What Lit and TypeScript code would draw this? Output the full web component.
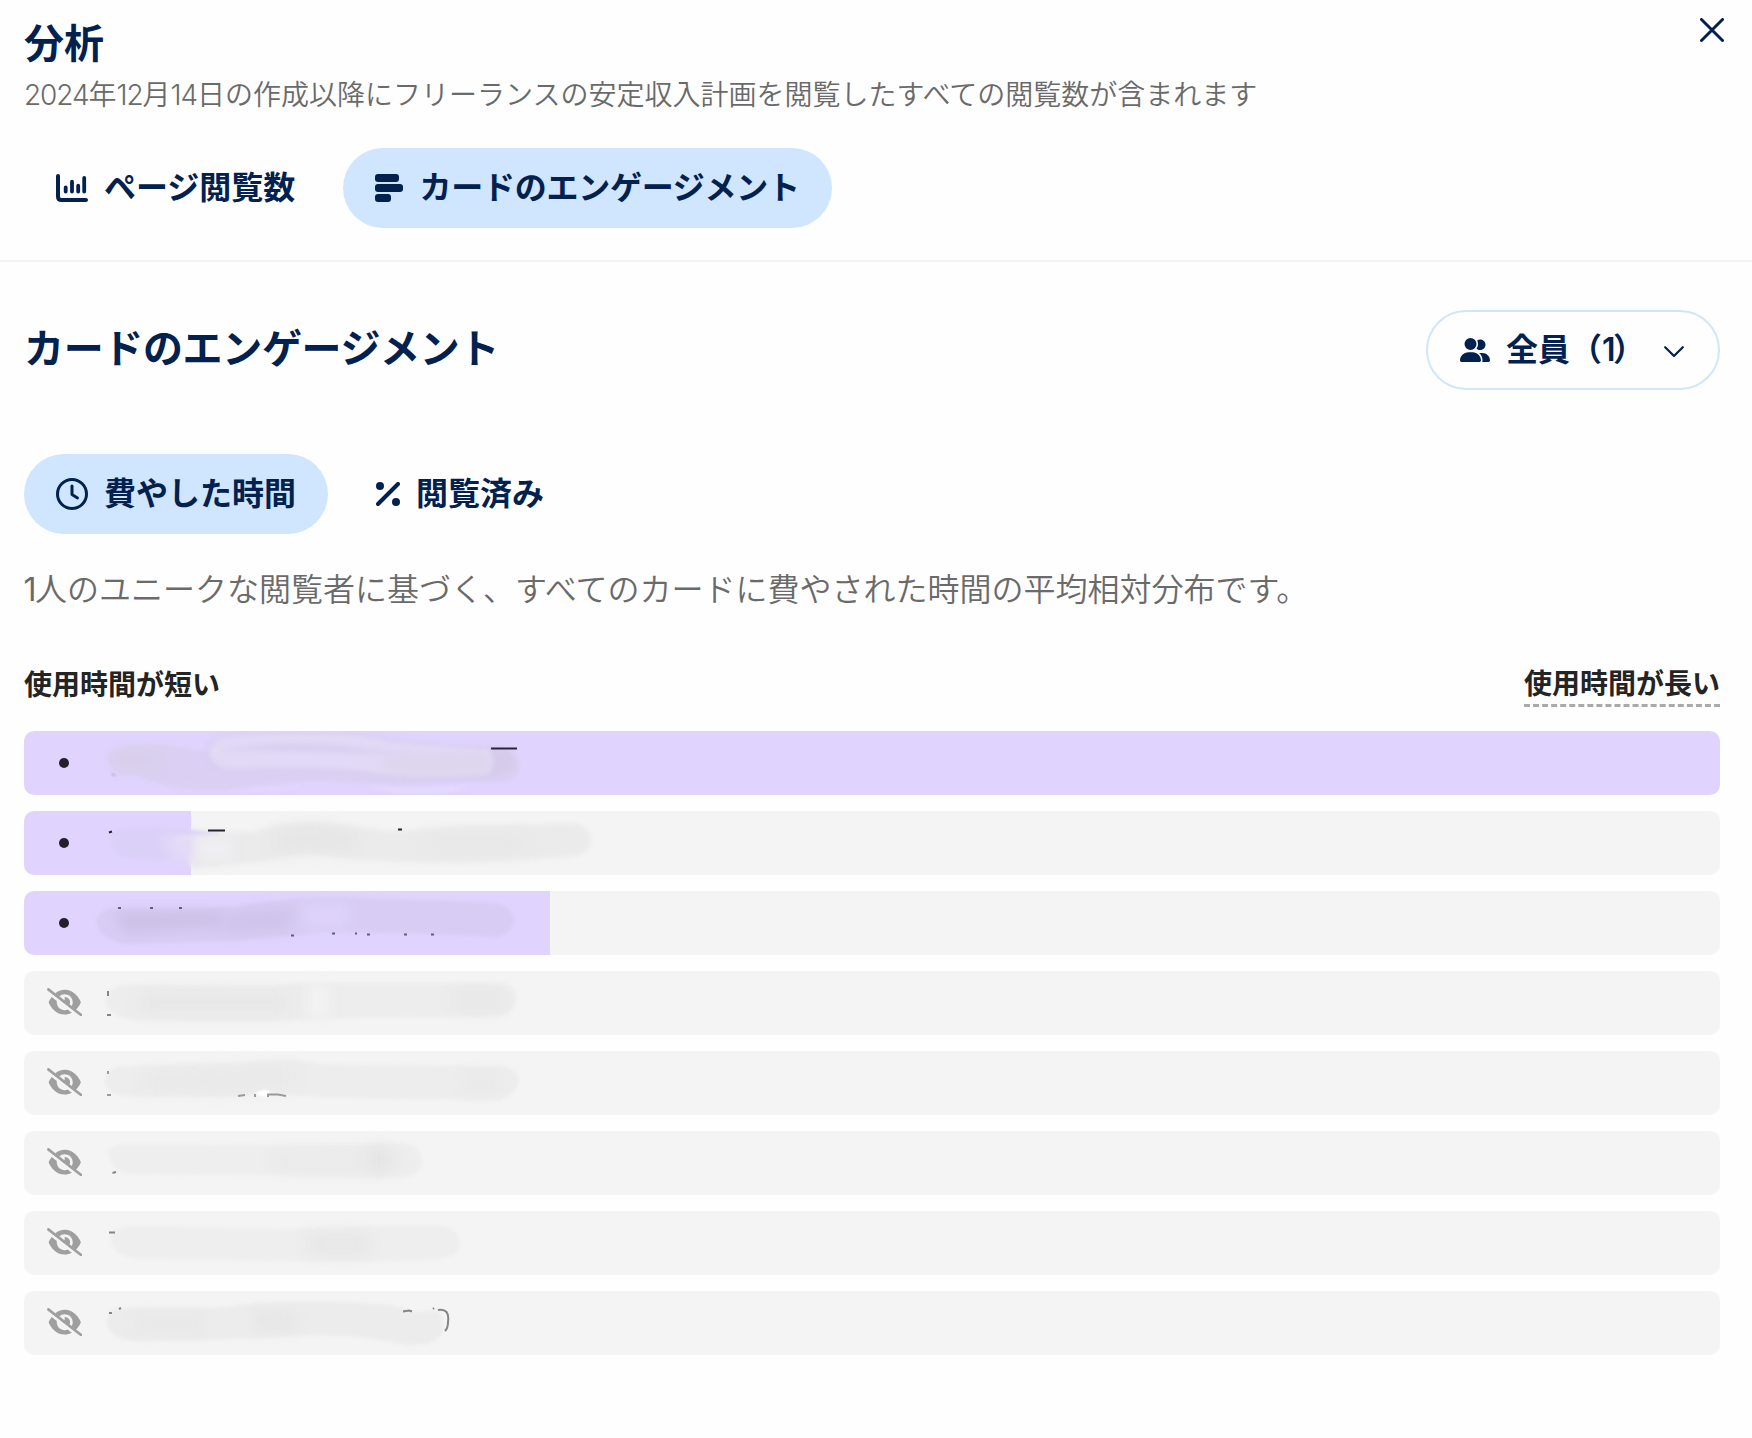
import { LitElement, html, css, svg } from "lit";
import { customElement, property } from "lit/decorators.js";

const icons: Record<string, unknown> = {
  chart: svg`<svg width="32" height="28" viewBox="0 0 32 28" fill="none" stroke="currentColor" stroke-linecap="round">
    <path stroke-width="4" stroke-linejoin="round" d="M2 2V22.500Q2 26 5.500 26H30"/>
    <path stroke-width="3.800" d="M9.700 13.500V17.500M16 7.700V17.500M22.200 11.700V17.500M28.200 4V17.500"/></svg>`,
  bars: svg`<svg width="28" height="28" viewBox="0 0 28 28" fill="currentColor">
    <rect width="24" height="8" rx="3"/><rect y="10" width="28" height="8" rx="3"/><rect y="20" width="16" height="8" rx="3"/></svg>`,
  clock: svg`<svg width="32" height="32" viewBox="0 0 32 32" fill="none" stroke="currentColor" stroke-width="3" stroke-linecap="round" stroke-linejoin="round">
    <circle cx="16" cy="16" r="14.500"/><path d="M16 8V16.500L21.500 20"/></svg>`,
  percent: svg`<svg width="24" height="24" viewBox="0 0 24 24" fill="currentColor">
    <circle cx="4" cy="4" r="4"/><circle cx="20" cy="20" r="4"/><path d="M2 22L22 2" stroke="currentColor" stroke-width="4" stroke-linecap="round"/></svg>`,
  users: svg`<svg width="30" height="24" viewBox="0 0 640 512" fill="currentColor">
    <path d="M96 128a128 128 0 1 1 256 0A128 128 0 1 1 96 128zM0 482.300C0 383.800 79.800 304 178.300 304h91.400C368.200 304 448 383.800 448 482.300c0 16.400-13.300 29.700-29.700 29.700H29.700C13.300 512 0 498.700 0 482.300zM609.300 512H471.400c5.400-9.400 8.600-20.300 8.600-32v-8c0-60.700-27.100-115.200-69.800-151.800c2.400-.1 4.700-.2 7.100-.2h61.400C567.800 320 640 392.200 640 481.300c0 17-13.800 30.700-30.700 30.700zM432 256c-31 0-59-12.600-79.300-32.900C372.400 196.500 384 163.600 384 128c0-26.800-6.600-52.100-18.300-74.300C384.300 40.100 407.200 32 432 32c61.900 0 112 50.100 112 112s-50.100 112-112 112z"/></svg>`,
  chevron: svg`<svg width="20" height="12" viewBox="0 0 20 12" fill="none" stroke="currentColor" stroke-width="2.200" stroke-linecap="round" stroke-linejoin="round"><path d="M1.200 1.200L10 10L18.800 1.200"/></svg>`,
  close: svg`<svg width="24" height="24" viewBox="0 0 24 24" fill="none" stroke="currentColor" stroke-width="3" stroke-linecap="round"><path d="M1.500 1.500L22.500 22.500M22.500 1.500L1.500 22.500"/></svg>`,
  eye: svg`<svg width="35.500" height="28.400" viewBox="0 0 640 512" fill="currentColor">
    <path d="M38.800 5.100C28.400-3.100 13.300-1.200 5.100 9.200S-1.200 34.700 9.200 42.900l592 464c10.400 8.200 25.500 6.300 33.700-4.100s6.300-25.500-4.100-33.700L525.600 386.700c39.600-40.600 66.400-86.100 79.900-118.400c3.300-7.900 3.300-16.700 0-24.600c-14.900-35.700-46.200-87.700-93-131.100C465.500 68.800 400.800 32 320 32c-68.200 0-125 26.300-169.300 60.800L38.800 5.100zM223.100 149.500C248.600 126.200 282.700 112 320 112c79.500 0 144 64.500 144 144c0 24.900-6.300 48.300-17.400 68.700L408 294.500c8.400-19.300 10.600-41.400 4.800-63.300c-11.100-41.500-47.800-69.400-88.600-71.100c-5.800-.2-9.200 6.100-7.400 11.700c2.100 6.400 3.300 13.200 3.300 20.300c0 10.200-2.400 19.800-6.600 28.300l-90.300-70.800zM373 389.900c-16.400 6.500-34.300 10.100-53 10.100c-79.500 0-144-64.500-144-144c0-6.900 .5-13.600 1.400-20.200L83.100 161.500C60.300 191.200 44 220.800 34.500 243.700c-3.300 7.900-3.300 16.700 0 24.600c14.900 35.700 46.200 87.700 93 131.100C174.500 443.200 239.200 480 320 480c47.800 0 89.900-12.900 126.200-32.500L373 389.900z"/></svg>`,
};

interface Patch { d: string; c: string; b?: number; }
interface Card { share: number; hidden?: boolean; patches: Patch[]; specks: string; speck: string; }

/* Masked card names: coordinates are relative to the row (row height 64). */
const cards: Card[] = [
  { share: 100, speck: "#2b2438", specks: "M467 17.500H493",
    patches: [
      { d: "M84 25L91 17M88 42V44L93 45", c: "#9d90b4", b: 1 },
      { d: "M85 24Q94 12 150 14L190 22L420 18L480 20Q497 24 495 38Q493 50 475 51L420 51Q370 56 330 52T220 57T110 43Q86 47 84 24Z", c: "#dbd0f3", b: 1.5 },
      { d: "M86 22Q100 12 140 17V41L95 42Q86 40 86 22Z", c: "#d9cfed", b: 4 },
      { d: "M150 50Q210 64 280 54Q230 66 150 50ZM340 54Q400 64 450 53Q400 70 340 54Z", c: "#e8e0fd", b: 2 },
      { d: "M183 20Q185 4 220 4Q320 -3 370 10Q440 17 480 16Q495 22 490 36Q488 46 460 46Q400 50 350 43T210 38Q187 38 183 20Z", c: "#d6cbeb", b: 3 },
      { d: "M185 20Q188 4 220 4Q320 -3 370 11Q440 17 465 18Q472 28 465 43Q400 49 350 42T210 38Q187 38 185 20Z", c: "#e2d9f6", b: 2.5 },
      { d: "M195 19Q270 9 330 17T450 25Q400 24 330 21T195 19Z", c: "#d6cced", b: 2.5 },
      { d: "M360 27L460 23Q471 28 465 41Q410 46 360 40Z", c: "#ddd5ed", b: 4 },
    ] },
  { share: 9.85, speck: "#26222b", specks: "M184 19.500H201M85 21.500L88 20.500M374 18.500H378",
    patches: [
      { d: "M86 23Q96 15 150 17L195 22V53L165 50L100 47Q86 42 86 23Z", c: "#dbd0f8", b: 1.5 },
      { d: "M150 26L230 20Q270 8 310 13T365 20L430 16L545 12Q567 13 567 30Q566 46 535 47L430 51Q360 53 315 46T240 51L168 57Z", c: "#ebebeb", b: 2 },
      { d: "M250 20Q290 10 330 21V41Q290 38 250 44Z", c: "#e6e6e6", b: 7 },
      { d: "M400 22H500V43H410Z", c: "#e8e8e8", b: 7 },
      { d: "M135 24H172V50H148Z", c: "#e2d9f8", b: 6 },
      { d: "M172 26H210V50H172Z", c: "#eeedf1", b: 6 },
    ] },
  { share: 31, speck: "#655c78", specks: "M94 17H97M126 17H129M155 17H158M267 44.500H270M308 42.500H311M331 42.500H333M343 43.500H346M380 43.500H383M407 43.500H410",
    patches: [
      { d: "M72 30Q75 18 90 18L210 16Q280 3 340 7L460 11Q490 12 490 29Q488 46 468 46L410 43L300 41L210 50L100 53Q73 46 72 30Z", c: "#d8ccf4", b: 1.5 },
      { d: "M90 20H200V36L100 42Z", c: "#cdc1e8", b: 6 },
      { d: "M200 22Q250 14 270 18L265 40L200 43Z", c: "#d0c4ec", b: 6 },
      { d: "M280 12H325V37H280Z", c: "#ddd2fa", b: 6 },
    ] },
  { share: 0, hidden: true, speck: "#858585", specks: "M84 20V25M83 44H87",
    patches: [
      { d: "M82 31Q84 13 105 14L250 15Q270 11 300 12L470 12Q493 12 492 30Q488 45 470 46L340 47L220 51L110 49Q84 46 82 31Z", c: "#ededed", b: 1.5 },
      { d: "M115 20H265V43H115Z", c: "#e8e8e8", b: 7 }, { d: "M284 13H305V47H284Z", c: "#f2f2f2", b: 6 }, { d: "M430 17H480V41H430Z", c: "#e8e8e8", b: 6 },
    ] },
  { share: 0, hidden: true, speck: "#9a9a9a", specks: "M84 20V23M83 44H87M214 45L221 44M231 43V46M244 46V43.500H254L262 45",
    patches: [
      { d: "M81 31Q82 14 105 15L220 11Q270 6 300 13L470 15Q495 15 495 31Q490 48 470 49L350 48L290 46L240 41L200 46L110 46Q82 45 81 31Z", c: "#ededed", b: 1.5 },
      { d: "M120 22L240 17L270 14V37L200 41L120 39Z", c: "#e9e9e9", b: 7 },
      { d: "M231 43Q239 36 247 41L242 46Z", c: "#fff", b: 1 }, { d: "M440 20H475V42H440Z", c: "#eaeaea", b: 6 },
    ] },
  { share: 0, hidden: true, speck: "#858585", specks: "M88.5 42L92 41",
    patches: [
      { d: "M84 22Q88 12 110 13L280 14L380 12Q397 14 398 31Q396 45 381 46L346 47L250 44L110 43Q88 43 84 22Z", c: "#eee", b: 1.5 },
      { d: "M250 20H375V40H250Z", c: "#eaeaea", b: 7 }, { d: "M345 16H365V40H345Z", c: "#e5e5e5", b: 6 },
    ] },
  { share: 0, hidden: true, speck: "#858585", specks: "M85 21.500H91",
    patches: [
      { d: "M87 23Q95 14 120 15L260 18L330 15L415 15Q437 16 436 34Q434 47 410 49L320 51L120 48Q84 48 87 23Z", c: "#eee", b: 1.5 },
      { d: "M285 22H345V44H285Z", c: "#e7e7e7", b: 7 },
    ] },
  { share: 0, hidden: true, speck: "#858585", specks: "M85 22H88M95 18L97 17M379 20.500L385 19.500L388 20.500M409 18L410 17M414 19Q426 17 424 31Q424 37 421 40",
    patches: [
      { d: "M83 32Q82 18 97 17L190 17Q250 8 320 11T382 21L415 20Q424 36 416 45Q405 56 382 54Q330 43 290 44L220 48L110 50Q85 48 83 32Z", c: "#ececec", b: 1.5 },
      { d: "M110 23H180V43H110Z", c: "#e9e9e9", b: 6 }, { d: "M230 19H272V41H230Z", c: "#e7e7e7", b: 6 },
    ] },
];

@customElement("pill-tab")
export class PillTab extends LitElement {
  @property() icon = "";
  @property() label = "";
  @property({ type: Boolean, reflect: true }) active = false;
  static styles = css`
    :host { display: flex; align-items: center; gap: 16px; box-sizing: border-box; height: 80px; padding: 0 32px; border-radius: 40px; color: #02214f; }
    :host([active]) { background: #d0e5fe; }
    svg { display: block; flex: none; }
    .label { font-size: 32px; line-height: 46px; font-weight: 600; white-space: nowrap; }
    .label.bars { letter-spacing: -0.25px; }
    .icon { flex: none; }
  `;
  render() {
    return html`<span class="icon">${icons[this.icon]}</span><span class="label ${this.icon}">${this.label}</span>`;
  }
}

@customElement("card-row")
export class CardRow extends LitElement {
  @property({ attribute: false }) card!: Card;
  static styles = css`
    :host { display: block; }
    .row { position: relative; height: 64px; border-radius: 10px; background: #f4f4f4; overflow: hidden; }
    .fill { height: 100%; background: #e0d4fe; }
    .mark { position: absolute; left: 22px; top: 0; width: 37px; height: 62px; display: flex; align-items: center; justify-content: center; color: #9f9f9f; }
    .mark svg { display: block; }
    .dot { width: 10px; height: 10px; border-radius: 50%; background: #231f2b; margin: 2px 0 0 -1px; }
    .mask { position: absolute; left: 0; top: 0; }
  `;
  render() {
    const c = this.card;
    return html`<div class="row">
      <div class="fill" style="width:${c.share}%"></div>
      <svg class="mask" width="640" height="64" viewBox="0 0 640 64">
        ${c.patches.map((p) => svg`<path d=${p.d} fill=${p.c} style="filter:blur(${p.b ?? 2}px)"/>`)}
        <path d=${c.specks} fill="none" stroke=${c.speck} stroke-width="2"/>
      </svg>
      <div class="mark">${c.hidden ? icons.eye : html`<span class="dot"></span>`}</div>
    </div>`;
  }
}

@customElement("app-root")
export class AppRoot extends LitElement {
  static styles = css`
    :host { display: block; box-sizing: border-box; height: 1438px; background: #fefefe; color: #02214f; overflow: hidden;
      font-family: Inter, "Noto Sans CJK JP", sans-serif; }
    svg { display: block; }
    header { box-sizing: border-box; height: 262px; border-bottom: 2px solid #f3f3f3; display: flex; justify-content: space-between; padding: 15px 28px 0 24px; }
    h1, h2, p { margin: 0; white-space: nowrap; }
    h1, h2 { font-size: 40px; line-height: 58px; font-weight: 600; }
    h2 { letter-spacing: -0.35px; padding-bottom: 2px; }
    .subtitle { font-size: 28px; line-height: 40px; color: #6a6a6a; margin-top: 2px; font-weight: 350; }
    .num { letter-spacing: -1.1px; }
    .tabs { display: flex; gap: 16px; }
    header .tabs { margin-top: 33px; }
    .close { padding-top: 3px; }
    main { padding: 48px 32px 0 24px; }
    .top { display: flex; justify-content: space-between; align-items: center; height: 80px; }
    .select { box-sizing: border-box; width: 294px; height: 80px; border: 2px solid #d2e5fb; border-radius: 40px; padding: 0 34px 0 32px; display: flex; align-items: center; }
    .select .text { font-size: 32px; font-weight: 600; line-height: 46px; margin-left: 16px; white-space: nowrap; }
    .one { letter-spacing: -2.5px; }
    .select .chev { margin-left: auto; padding-top: 3px; }
    main .tabs { margin-top: 64px; }
    .desc { font-size: 32px; line-height: 46px; color: #6a6a6a; margin-top: 33px; font-weight: 350; }
    .desc .one { font-weight: 400; letter-spacing: -1.5px; margin-left: -0.5px; }
    .scale { display: flex; justify-content: space-between; align-items: flex-start; height: 67px; margin-top: 51px; font-size: 28px; line-height: 42px; font-weight: 600; color: #242424; }
    .long { border-bottom: 3px dashed #aaa; height: 40px; line-height: 40px; }
    .list { display: grid; gap: 16px; }
  `;
  render() {
    return html`
      <header>
        <div>
          <h1>分析</h1>
          <p class="subtitle"><span class="num">2024</span>年<span class="num">12</span>月<span class="num">14</span>日の作成以降にフリーランスの安定収入計画を閲覧したすべての閲覧数が含まれます</p>
          <div class="tabs">
            <pill-tab icon="chart" label="ページ閲覧数"></pill-tab>
            <pill-tab icon="bars" label="カードのエンゲージメント" active></pill-tab>
          </div>
        </div>
        <span class="close">${icons.close}</span>
      </header>
      <main>
        <div class="top">
          <h2>カードのエンゲージメント</h2>
          <div class="select">${icons.users}<span class="text">全員（<span class="one">1</span>）</span><span class="chev">${icons.chevron}</span></div>
        </div>
        <div class="tabs">
          <pill-tab icon="clock" label="費やした時間" active></pill-tab>
          <pill-tab icon="percent" label="閲覧済み"></pill-tab>
        </div>
        <p class="desc"><span class="one">1</span>人のユニークな閲覧者に基づく、すべてのカードに費やされた時間の平均相対分布です。</p>
        <div class="scale"><span>使用時間が短い</span><span class="long">使用時間が長い</span></div>
        <div class="list">${cards.map((c) => html`<card-row .card=${c}></card-row>`)}</div>
      </main>`;
  }
}
